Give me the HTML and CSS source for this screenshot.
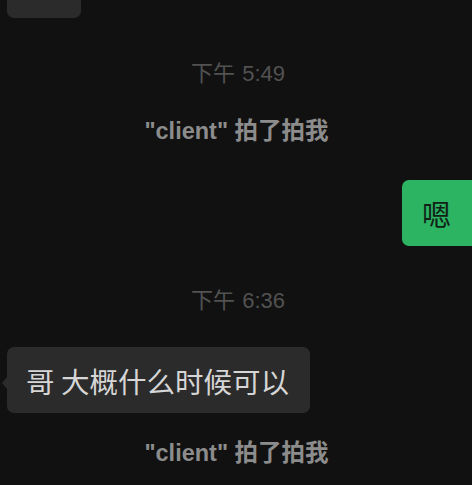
FILE: index.html
```html
<!DOCTYPE html>
<html lang="zh-CN">
<head>
<meta charset="utf-8">
<link rel="stylesheet" href="styles.css">
</head>
<body>
<div class="chat">
  <div class="bubble bubble-in bubble-top"></div>
  <div class="time t1">下午 5:49</div>
  <div class="sys s1">"client" 拍了拍我</div>
  <div class="row-out">
    <div class="bubble bubble-out">嗯</div>
  </div>
  <div class="time t2">下午 6:36</div>
  <div class="row-in">
    <div class="bubble bubble-in msg">哥 大概什么时候可以</div>
  </div>
  <div class="sys s2">"client" 拍了拍我</div>
</div>
</body>
</html>
```

FILE: styles.css
```css
html, body {
  margin: 0;
  padding: 0;
  background: #111111;
  overflow: hidden;
}
body {
  width: 472px;
  height: 485px;
  font-family: "Liberation Sans", "Noto Sans CJK SC", sans-serif;
}
.chat {
  display: flex;
  flex-direction: column;
}
.bubble {
  box-sizing: border-box;
  border-radius: 7px;
}
.bubble-top {
  margin-top: -20px;
  margin-left: 7px;
  width: 74px;
  height: 38px;
  background: #2b2b2b;
}
.time {
  text-align: center;
  color: #525252;
  font-size: 22px;
  line-height: 26px;
  padding-left: 4px;
  word-spacing: 1px;
}
.t1 { margin-top: 43px; }
.t2 { margin-top: 42px; }
.sys {
  text-align: center;
  color: #8c8c8c;
  font-weight: bold;
  font-size: 23.5px;
  line-height: 28px;
  padding-left: 1px;
}
.s1 { margin-top: 30px; }
.s2 { margin-top: 26px; }
.row-out {
  display: flex;
  justify-content: flex-end;
  margin-top: 35px;
}
.bubble-out {
  background: #2db463;
  color: #0f2216;
  height: 66px;
  width: 70px;
  border-radius: 7px 0 0 7px;
  padding-left: 20px;
  display: flex;
  align-items: center;
  font-size: 29px;
  font-family: "Noto Sans CJK SC", sans-serif;
}
.row-in {
  display: flex;
  margin-top: 33px;
}
.bubble-in {
  background: #2b2b2b;
}
.msg {
  position: relative;
  margin-left: 7px;
  height: 66px;
  padding: 0 21px 0 19px;
  display: flex;
  align-items: center;
  color: #d6d6d6;
  font-size: 28.5px;
  font-family: "Noto Sans CJK SC", sans-serif;
}
.msg::before {
  content: "";
  position: absolute;
  left: -5px;
  top: 30px;
  border-style: solid;
  border-width: 6px 5px 6px 0;
  border-color: transparent #2b2b2b transparent transparent;
}
```
